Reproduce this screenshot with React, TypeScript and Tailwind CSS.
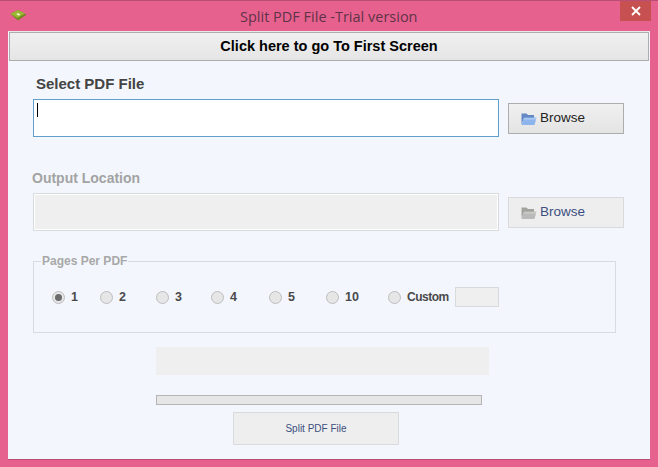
const FolderIcon = ({ muted }: { muted?: boolean }) => (
  <svg width="16" height="14" viewBox="0 0 16 14" className="shrink-0">
    <path d="M0.5 1.5 H5.5 L7 3 H13 V6 H3 L0.5 12.5 Z" fill={muted ? '#a3a39e' : '#6488c4'} />
    <path d="M3 5.5 H15.5 L13.5 13 H0.5 Z" fill={muted ? '#bababa' : '#8db4ec'} />
    <path d="M3.4 6.2 H15 L14.6 7.6 H3 Z" fill={muted ? '#cfcfca' : '#b5d0f5'} />
  </svg>
);

const AppIcon = () => (
  <svg width="17" height="11" viewBox="0 0 17 11">
    <path d="M0.5 4 L8 0 L16.5 4.5 L8 10.5 Z" fill="#6f8a1e" />
    <path d="M0.5 4 L8 0 L15 3.6 L7.5 8 Z" fill="#9ab832" />
    <path d="M7.5 3 L10.5 4.6 L9 5.8 L6.3 4.2 Z" fill="#eef6d2" />
  </svg>
);

const pageOptions = [
  { label: '1', width: 'w-[48px]', checked: true },
  { label: '2', width: 'w-[56px]' },
  { label: '3', width: 'w-[55px]' },
  { label: '4', width: 'w-[58px]' },
  { label: '5', width: 'w-[57px]' },
  { label: '10', width: 'w-[62px]' },
  { label: 'Custom', width: 'w-[67px]' },
];

const BrowseButton = ({ disabled }: { disabled?: boolean }) => (
  <button
    className={`ml-[9px] flex h-[31px] w-[116px] items-center gap-[3px] border pl-[12px] pt-px text-[13.5px] ${
      disabled
        ? 'border-[#d8dadc] bg-[#eeeeee] text-[#3c4f80]'
        : 'border-[#adadad] bg-gradient-to-b from-[#f0f0f0] to-[#e4e4e4] text-[#222222]'
    }`}
  >
    <FolderIcon muted={disabled} />
    Browse
  </button>
);

export default function App() {
  return (
    <div className="flex h-[467px] w-[658px] flex-col border-t border-[#b94d74] bg-[#e7618f] font-['Liberation_Sans',sans-serif]">
      <div className="flex h-[30px] items-start pl-[10px] pr-[7px]">
        <div className="mt-[9px] w-[18px]">
          <AppIcon />
        </div>
        <div className="flex-1 pl-[212px] pt-[6px] font-['Open_Sans',sans-serif] text-[14.5px] leading-[19px] text-[#5f3347]">
          Split PDF File -Trial version
        </div>
        <div className="flex h-[20px] w-[31px] items-center justify-center bg-[#c75050]">
          <svg width="10" height="10" viewBox="0 0 10 10">
            <path d="M1 1 L9 9 M9 1 L1 9" stroke="#ffffff" strokeWidth="1.8" />
          </svg>
        </div>
      </div>

      <div className="mx-[8px] box-border flex h-[429px] flex-col border-b border-t border-b-[#b94d74] border-t-[#e9e9e9] bg-[#f3f7fd]">
        <button className="mx-px h-[29px] border border-[#adadad] bg-gradient-to-b from-[#f0f0f0] to-[#e5e5e5] text-[14.5px] font-bold leading-none text-black">
          Click here to go To First Screen
        </button>

        <div className="pl-[25px]">
          <div className="mt-[14px] pl-[3px] text-[15px] font-bold leading-[18px] text-[#444444]">Select PDF File</div>
          <div className="mt-[6px] flex items-center">
            <div className="h-[38px] w-[466px] border border-[#5f9fc9] bg-white pl-[3px] pt-[3px]">
              <div className="h-[14px] w-px bg-black" />
            </div>
            <BrowseButton />
          </div>

          <div className="-ml-px mt-[32px] text-[14px] font-bold leading-[18px] text-[#a3a3a3]">Output Location</div>
          <div className="mt-[6px] flex items-center">
            <div className="h-[38px] w-[466px] border border-[#d8dadc] bg-[#efefef] outline outline-white -outline-offset-2" />
            <BrowseButton disabled />
          </div>

          <fieldset className="mt-[23px] h-[79px] w-[583px] border border-[#d8dce2]">
            <legend className="ml-[7px] px-px text-[12px] font-bold leading-[14px] text-[#a8a8a8]">Pages Per PDF</legend>
            <div className="mt-[19px] flex items-center pl-[18px]">
              {pageOptions.map(option => (
                <div key={option.label} className={`flex items-center gap-[6px] ${option.width}`}>
                  <span className="flex h-[13px] w-[13px] items-center justify-center rounded-full border border-[#bdbdbd] bg-[#e6e6e6]">
                    {option.checked && <span className="h-[7px] w-[7px] rounded-full bg-[#6b6b6b]" />}
                  </span>
                  <span className={`font-bold text-[#4a4a4a] ${option.label === 'Custom' ? 'text-[12px] tracking-[-0.5px]' : 'text-[12.5px]'}`}>
                    {option.label}
                  </span>
                </div>
              ))}
              <div className="h-[20px] w-[44px] border border-[#d8dadc] bg-[#efefef]" />
            </div>
          </fieldset>

          <div className="ml-[123px] mt-[14px] h-[28px] w-[333px] bg-[#efefef]" />
          <div className="ml-[123px] mt-[20px] h-[10px] w-[326px] border border-[#b5b5b5] bg-[#e6e6e6]" />
          <button className="ml-[200px] mt-[7px] h-[33px] w-[166px] border border-[#d8dadc] bg-[#eeeeee] text-[10px] text-[#3c4f80]">
            Split PDF File
          </button>
        </div>
      </div>
    </div>
  );
}
